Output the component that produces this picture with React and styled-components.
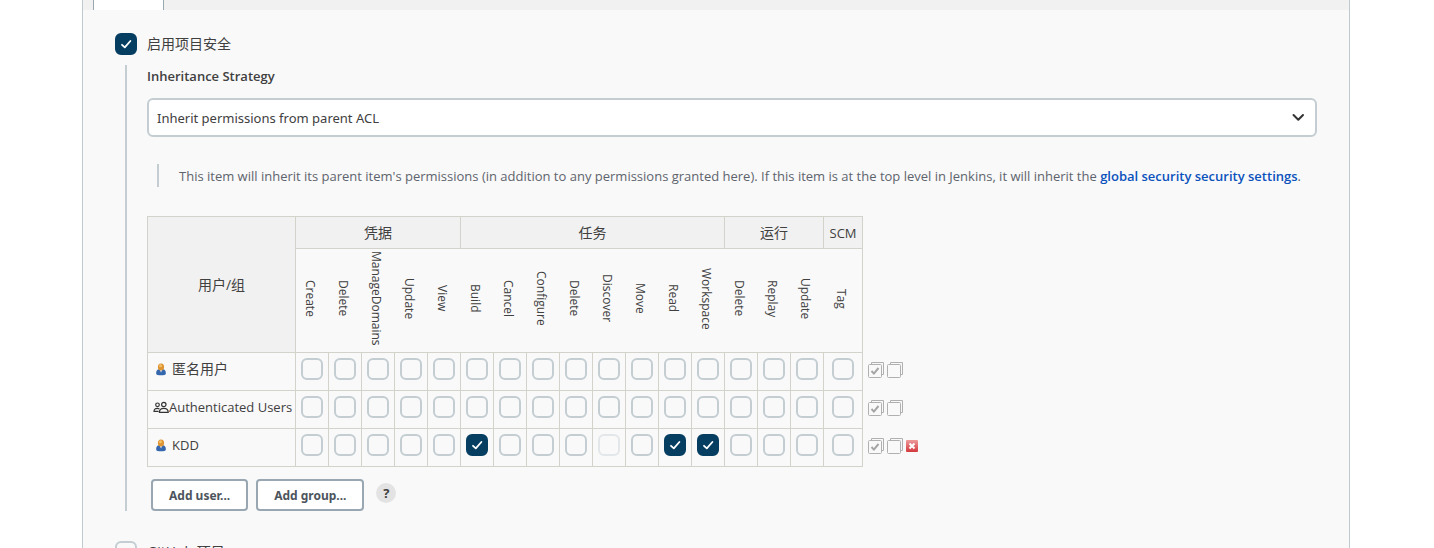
import React from "react";
import styled, { createGlobalStyle } from "styled-components";

const GlobalStyle = createGlobalStyle`
  *, *::before, *::after { box-sizing: border-box; }
  body {
    margin: 0;
    background: #fff;
    color: #404040;
    font-family: "Open Sans", "Noto Sans CJK SC", sans-serif;
    font-size: 13px;
    line-height: 20px;
  }
  button, select { font: inherit; color: inherit; }
`;

const Page = styled.div`
  height: 100vh;
  overflow: hidden;
  padding: 0 84px 0 82px;
`;

const Panel = styled.main`
  min-height: 100%;
  background: #f9f9f9;
  border: solid #bfcace;
  border-width: 0 1px;
`;

const TabBar = styled.div`
  display: flex;
  height: 10px;
  padding-left: 10px;
  background: #f1f1f1;
`;

const ActiveTab = styled.div`
  width: 71px;
  background: #fff;
  border: solid #9aa8b2;
  border-width: 0 1px;
`;

const Form = styled.form`
  padding: 23px 32px 0;
`;

const OptionLabel = styled.label`
  display: flex;
  align-items: center;
  gap: 10px;
  height: 22px;
  font-size: 14px;
`;

const BoxWrap = styled.span`
  position: relative;
  display: block;
  flex: none;
  width: 22px;
  height: 22px;
  opacity: ${(p) => (p.$faded ? 0.4 : 1)};
`;

const Box = styled.input`
  appearance: none;
  display: block;
  width: 22px;
  height: 22px;
  margin: 0;
  border: 2px solid #c3cdd2;
  border-radius: 6px;
  &:checked {
    background: #063e62;
    border-color: #063e62;
  }
  & + svg { display: none; }
  &:checked + svg { display: block; }
`;

const Tick = styled.svg`
  position: absolute;
  inset: 0;
  pointer-events: none;
`;

const Nested = styled.section`
  margin: 10px 0 30px 10px;
  padding-left: 20px;
  border-left: 2px solid #c3cdd2;
`;

const FieldLabel = styled.label`
  display: block;
  padding-top: 1px;
  margin-bottom: 12px;
  font-weight: 600;
`;

const SelectWrap = styled.div`
  position: relative;
`;

const Select = styled.select`
  appearance: none;
  display: block;
  width: 100%;
  height: 39px;
  padding: 0 40px 0 8px;
  background: #fff;
  border: 2px solid #c3cdd2;
  border-radius: 6px;
  font-family: "Noto Sans", "Noto Sans CJK SC", sans-serif;
`;

const Chevron = styled.svg`
  position: absolute;
  right: 12px;
  top: 14px;
  pointer-events: none;
`;

const Note = styled.p`
  display: flex;
  margin: 27px 0 29px 10px;
  padding: 2px 0 0 20px;
  border-left: 2px solid #c3cdd2;
  color: #5e646d;
  line-height: 21px;
`;

const NoteLink = styled.a`
  color: #0b52bd;
  font-weight: 600;
  text-decoration: none;
`;

const Matrix = styled.table`
  border-collapse: collapse;
  table-layout: fixed;
  width: 775px;
`;

const Cell = styled.td`
  padding: 5px 0 10px;
  border: 1px solid #d3d3cb;
  vertical-align: top;
  ${BoxWrap} { margin: 0 auto; }
`;

const GroupHead = styled.th`
  height: 32px;
  padding: 0;
  background: #f1f1f1;
  border: 1px solid #d3d3cb;
  font-weight: 400;
  font-size: ${(p) => (p.$latin ? "13px" : "14px")};
`;

const PermHead = styled.th`
  height: 104px;
  padding: 0 4px 4px 0;
  border: solid #d3d3cb;
  border-width: 1px ${(p) => (p.$last ? "1px" : "0")} 1px 0;
  font-weight: 400;
  font-size: 12px;
  line-height: 16px;
`;

const Vertical = styled.span`
  display: block;
  width: 16px;
  height: 98px;
  margin: 0 auto;
  writing-mode: vertical-rl;
  white-space: nowrap;
  text-align: center;
`;

const UserHead = styled.th`
  padding: 0;
  border: 1px solid #d3d3cb;
  font-weight: 400;
  text-align: left;
  vertical-align: top;
`;

const UserName = styled.span`
  display: flex;
  align-items: center;
  gap: ${(p) => (p.$tight ? "0" : "4px")};
  height: 32px;
  padding-left: ${(p) => (p.$tight ? "5px" : "6px")};
  font-size: ${(p) => (p.$cjk ? "14px" : "13px")};
  white-space: nowrap;
`;

const ToolsCell = styled.td`
  padding: 0 0 4px 5px;
  border: 0;
`;

const Tools = styled.div`
  display: flex;
  align-items: center;
  gap: 2px;
`;

const IconButton = styled.button`
  display: flex;
  padding: 0;
  background: none;
  border: 0;
`;

const Actions = styled.div`
  display: flex;
  gap: 8px;
  padding: 12px 0 0 4px;
`;

const ActionButton = styled.button`
  height: 32px;
  padding: 2px 16px 0;
  background: #fff;
  border: 2px solid #98a7b1;
  border-radius: 4px;
  color: #4d545d;
  font-family: "Noto Sans", "Noto Sans CJK SC", sans-serif;
  font-size: 12px;
  font-weight: 700;
`;

const HelpButton = styled.button`
  width: 20px;
  height: 20px;
  margin: 4px 0 0 4px;
  padding: 0;
  background: #e3e3e3;
  border: 0;
  border-radius: 50%;
  font-size: 13px;
  font-weight: 700;
  line-height: 20px;
`;

const groups = [
  { name: "凭据", perms: ["Create", "Delete", "ManageDomains", "Update", "View"] },
  { name: "任务", perms: ["Build", "Cancel", "Configure", "Delete", "Discover", "Move", "Read", "Workspace"] },
  { name: "运行", perms: ["Delete", "Replay", "Update"] },
  { name: "SCM", perms: ["Tag"], latin: true },
];

const permissions = groups.flatMap((g) => g.perms.map((p) => ({ id: `${g.name}/${p}`, label: p })));

const users = [
  { name: "匿名用户", icon: "person", cjk: true, granted: [], locked: [] },
  { name: "Authenticated Users", icon: "people", granted: [], locked: [] },
  {
    name: "KDD",
    icon: "person",
    granted: ["任务/Build", "任务/Read", "任务/Workspace"],
    locked: ["任务/Discover"],
    removable: true,
  },
];

function Checkbox({ faded, ...rest }) {
  return (
    <BoxWrap $faded={faded}>
      <Box type="checkbox" disabled={faded} {...rest} />
      <Tick width="22" height="22" viewBox="0 0 22 22" fill="none" stroke="#fff" strokeWidth="1.8" strokeLinecap="round" strokeLinejoin="round">
        <path d="M7 11.8l2.8 2.6L15.4 8" />
      </Tick>
    </BoxWrap>
  );
}

function PersonIcon() {
  return (
    <svg width="14" height="14" viewBox="0 0 14 14" aria-hidden="true">
      <path d="M2.200 10.500C2.200 8 4 7 7 7s4.800 1 4.800 3.500v1.300c0 1-2 1.500-4.800 1.500s-4.800-.5-4.800-1.500z" fill="#3467ad" />
      <path d="M5.500 7.500h3L7 10.500z" fill="#dce6f4" />
      <ellipse cx="7" cy="5" rx="3.100" ry="3.600" fill="#dd9432" />
      <circle cx="6.500" cy="3.800" r="1.500" fill="#f2c16b" />
    </svg>
  );
}

function PeopleIcon() {
  return (
    <svg width="16" height="14" viewBox="0 0 16 14" fill="none" stroke="#333" strokeWidth="1.200" aria-hidden="true">
      <circle cx="4.500" cy="4.800" r="1.800" />
      <circle cx="10.800" cy="4.500" r="2.200" />
      <path d="M6.400 12.400c0-2.700 1.700-4 4.400-4s4.400 1.300 4.400 4z" />
      <path d="M5.600 11.400H1c0-2 1.200-3 3.300-3 .9 0 1.600.2 2.100.5" />
    </svg>
  );
}

function StackIcon({ checked }) {
  return (
    <svg width="17" height="17" viewBox="0 0 17 17" fill="none" stroke="#b0b0b0" aria-hidden="true">
      <path d="M3.500 3V1.500h12v12H14" />
      <rect x="0.500" y="3.500" width="13" height="13" rx="1" />
      {checked && <path d="M3.500 10l2.400 2.600L10.500 7" strokeWidth="2" stroke="#a5a5a5" />}
    </svg>
  );
}

function RemoveIcon() {
  return (
    <svg width="12" height="12" viewBox="0 0 12 12" aria-hidden="true">
      <defs>
        <linearGradient id="removeFill" x1="0" y1="0" x2="0" y2="1">
          <stop offset="0" stopColor="#ee9a9a" />
          <stop offset="1" stopColor="#d4383c" />
        </linearGradient>
      </defs>
      <rect width="12" height="12" rx="1" fill="url(#removeFill)" />
      <path d="M3.500 3.500l5 5M8.500 3.500l-5 5" stroke="#fff" strokeWidth="2" />
    </svg>
  );
}

export default function App() {
  return (
    <>
      <GlobalStyle />
      <Page>
        <Panel>
          <TabBar>
            <ActiveTab />
          </TabBar>
          <Form onSubmit={(e) => e.preventDefault()}>
            <OptionLabel>
              <Checkbox defaultChecked />
              启用项目安全
            </OptionLabel>
            <Nested>
              <FieldLabel htmlFor="strategy">Inheritance Strategy</FieldLabel>
              <SelectWrap>
                <Select id="strategy">
                  <option>Inherit permissions from parent ACL</option>
                </Select>
                <Chevron width="13" height="10" viewBox="0 0 13 10" fill="none" stroke="#333" strokeWidth="2" strokeLinecap="round" strokeLinejoin="round">
                  <path d="M1.500 3l4.800 4.800L11 3" />
                </Chevron>
              </SelectWrap>
              <Note>
                <span>
                  This item will inherit its parent item's permissions (in addition to any permissions granted here). If this item is at the top level in Jenkins, it will inherit the{" "}
                  <NoteLink href="#security">global security security settings</NoteLink>.
                </span>
              </Note>
              <Matrix>
                <colgroup>
                  <col style={{ width: 148 }} />
                  {permissions.map((p) => (
                    <col key={p.id} style={{ width: p.label === "Tag" ? 39 : 33 }} />
                  ))}
                  <col style={{ width: 60 }} />
                </colgroup>
                <thead>
                  <tr>
                    <GroupHead rowSpan={2}>用户/组</GroupHead>
                    {groups.map((g) => (
                      <GroupHead key={g.name} colSpan={g.perms.length} $latin={g.latin}>
                        {g.name}
                      </GroupHead>
                    ))}
                  </tr>
                  <tr>
                    {permissions.map((p) => (
                      <PermHead key={p.id} $last={p.label === "Tag"}>
                        <Vertical>{p.label}</Vertical>
                      </PermHead>
                    ))}
                  </tr>
                </thead>
                <tbody>
                  {users.map((u) => (
                    <tr key={u.name}>
                      <UserHead scope="row">
                        <UserName $tight={u.icon === "people"} $cjk={u.cjk}>
                          {u.icon === "people" ? <PeopleIcon /> : <PersonIcon />}
                          {u.name}
                        </UserName>
                      </UserHead>
                      {permissions.map((p) => (
                        <Cell key={p.id}>
                          <Checkbox
                            aria-label={`${u.name} ${p.id}`}
                            defaultChecked={u.granted.includes(p.id)}
                            faded={u.locked.includes(p.id)}
                          />
                        </Cell>
                      ))}
                      <ToolsCell>
                        <Tools>
                          <IconButton type="button" aria-label="Select all">
                            <StackIcon checked />
                          </IconButton>
                          <IconButton type="button" aria-label="Unselect all">
                            <StackIcon />
                          </IconButton>
                          {u.removable && (
                            <IconButton type="button" aria-label="Remove">
                              <RemoveIcon />
                            </IconButton>
                          )}
                        </Tools>
                      </ToolsCell>
                    </tr>
                  ))}
                </tbody>
              </Matrix>
              <Actions>
                <ActionButton type="button">Add user...</ActionButton>
                <ActionButton type="button">Add group...</ActionButton>
                <HelpButton type="button" aria-label="Help">?</HelpButton>
              </Actions>
            </Nested>
            <OptionLabel>
              <Checkbox />
              GitHub 项目
            </OptionLabel>
          </Form>
        </Panel>
      </Page>
    </>
  );
}
